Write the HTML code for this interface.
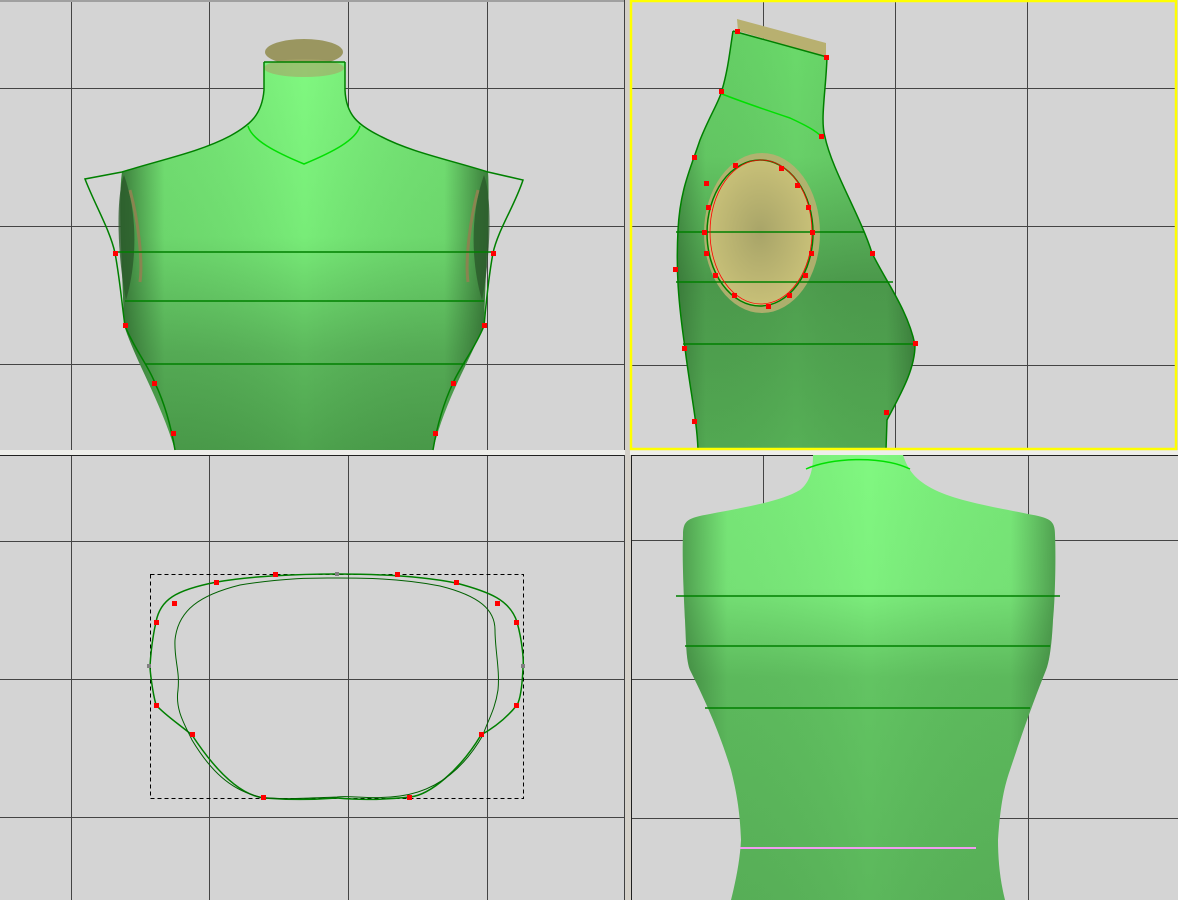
<!DOCTYPE html>
<html><head><meta charset="utf-8"><style>
html,body{margin:0;padding:0;background:#d4d0c8;}
svg{display:block}
</style></head><body>
<svg width="1178" height="900" viewBox="0 0 1178 900" xmlns="http://www.w3.org/2000/svg">
<defs>
<linearGradient id="gv" x1="0" y1="0" x2="0" y2="1">
<stop offset="0" stop-color="#80f880"/><stop offset="0.45" stop-color="#78ec78"/><stop offset="0.75" stop-color="#5cb85c"/><stop offset="1" stop-color="#4ea44e"/></linearGradient>
<linearGradient id="gh" x1="0" y1="0" x2="1" y2="0">
<stop offset="0" stop-color="#1e4a1e" stop-opacity="0.7"/><stop offset="0.12" stop-color="#2a5a2a" stop-opacity="0.15"/><stop offset="0.5" stop-color="#000" stop-opacity="0"/><stop offset="0.88" stop-color="#2a5a2a" stop-opacity="0.15"/><stop offset="1" stop-color="#1e4a1e" stop-opacity="0.7"/></linearGradient>
<linearGradient id="gs" x1="0" y1="0" x2="0" y2="1">
<stop offset="0" stop-color="#6ada6a"/><stop offset="0.3" stop-color="#68d068"/><stop offset="0.6" stop-color="#4e9e4e"/><stop offset="1" stop-color="#56b056"/></linearGradient>
<radialGradient id="gk" cx="0.5" cy="0.5" r="0.5"><stop offset="0" stop-color="#a8a468"/><stop offset="1" stop-color="#c8c078"/></radialGradient>
<linearGradient id="gb" x1="0" y1="0" x2="0" y2="1">
<stop offset="0" stop-color="#80f880"/><stop offset="0.3" stop-color="#7ef07e"/><stop offset="0.5" stop-color="#62c462"/><stop offset="1" stop-color="#5cb85c"/></linearGradient>
</defs>
<rect x="0" y="0" width="625" height="450" fill="#d4d4d4"/>
<rect x="630" y="0" width="548" height="451" fill="#d4d4d4"/>
<rect x="0" y="455" width="625" height="445" fill="#d4d4d4"/>
<rect x="631" y="455" width="547" height="445" fill="#d4d4d4"/>
<rect x="0" y="450" width="1178" height="5" fill="#eeeeea"/>
<rect x="625" y="0" width="5" height="900" fill="#d4d0c8"/>
<line x1="0" y1="1" x2="625" y2="1" stroke="#a0a0a0" stroke-width="2"/>
<line x1="624.5" y1="0" x2="624.5" y2="450" stroke="#404040"/>
<line x1="0" y1="455.5" x2="625" y2="455.5" stroke="#202020"/>
<line x1="624.5" y1="455" x2="624.5" y2="900" stroke="#404040"/>
<line x1="631" y1="455.5" x2="1178" y2="455.5" stroke="#202020"/>
<line x1="631.5" y1="455" x2="631.5" y2="900" stroke="#202020"/>
<g stroke="#444" stroke-width="1">
<line x1="71.5" y1="2" x2="71.5" y2="450"/><line x1="209.5" y1="2" x2="209.5" y2="450"/><line x1="348.5" y1="2" x2="348.5" y2="450"/><line x1="487.5" y1="2" x2="487.5" y2="450"/>
<line x1="0" y1="88.5" x2="624" y2="88.5"/><line x1="0" y1="226.5" x2="624" y2="226.5"/><line x1="0" y1="364.5" x2="624" y2="364.5"/>
<line x1="763.5" y1="2" x2="763.5" y2="450"/><line x1="895.5" y1="2" x2="895.5" y2="450"/><line x1="1027.5" y1="2" x2="1027.5" y2="450"/>
<line x1="632" y1="88.5" x2="1176" y2="88.5"/><line x1="632" y1="226.5" x2="1176" y2="226.5"/><line x1="632" y1="365.5" x2="1176" y2="365.5"/>
<line x1="71.5" y1="456" x2="71.5" y2="900"/><line x1="209.5" y1="456" x2="209.5" y2="900"/><line x1="348.5" y1="456" x2="348.5" y2="900"/><line x1="487.5" y1="456" x2="487.5" y2="900"/>
<line x1="0" y1="541.5" x2="624" y2="541.5"/><line x1="0" y1="679.5" x2="624" y2="679.5"/><line x1="0" y1="817.5" x2="624" y2="817.5"/>
<line x1="763.5" y1="456" x2="763.5" y2="900"/><line x1="1028.5" y1="456" x2="1028.5" y2="900"/>
<line x1="632" y1="540.5" x2="1178" y2="540.5"/><line x1="632" y1="679.5" x2="1178" y2="679.5"/><line x1="632" y1="818.5" x2="1178" y2="818.5"/>
</g>

<ellipse cx="304" cy="52" rx="39" ry="13" fill="#9a9660"/>
<path d="M264,62 L264,90 C262,115 250,125 230,136 C200,152 160,160 122,172 C118,200 122,260 124,325 C135,360 160,400 175,450 L433,450 C445,400 470,360 484,325 C486,260 490,200 488,172 C450,160 410,152 380,136 C358,125 346,115 345,90 L345,62 Z" fill="url(#gv)"/>
<path d="M264,62 L264,90 C262,115 250,125 230,136 C200,152 160,160 122,172 C118,200 122,260 124,325 C135,360 160,400 175,450 L433,450 C445,400 470,360 484,325 C486,260 490,200 488,172 C450,160 410,152 380,136 C358,125 346,115 345,90 L345,62 Z" fill="url(#gh)"/>
<ellipse cx="304" cy="68" rx="40" ry="9" fill="#a8a468" opacity="0.6"/>
<path d="M124,175 C115,200 118,260 126,300 C135,270 140,220 124,175Z" fill="#2a5a2a" opacity="0.8"/>
<path d="M484,175 C493,200 490,260 482,300 C473,270 468,220 484,175Z" fill="#2a5a2a" opacity="0.8"/>
<path d="M130,190 C138,220 143,260 140,282" stroke="#8a8450" stroke-width="3" fill="none"/>
<path d="M478,190 C470,220 465,260 468,282" stroke="#8a8450" stroke-width="3" fill="none"/>
<g fill="none" stroke="#008000" stroke-width="1.5">
<line x1="264" y1="62" x2="345" y2="62"/>
<path d="M264,62 L264,90 C262,115 250,125 230,136 C200,152 160,160 122,172 L85,179 C95,205 110,230 115,253 C120,280 122,305 125,326 C135,350 148,365 155,383 C163,400 170,420 175,450"/>
<path d="M345,62 L345,90 C346,115 358,125 380,136 C410,152 450,160 488,172 L523,180 C515,205 498,230 493,253 C488,280 486,305 484,326 C474,350 461,365 453,383 C445,400 438,420 433,450"/>
<line x1="115" y1="252" x2="493" y2="252"/><line x1="125" y1="301" x2="484" y2="301"/><line x1="145" y1="364" x2="465" y2="364"/>
</g>
<path d="M248,126 C252,140 275,152 304,164 C333,152 356,140 360,126" fill="none" stroke="#00e000" stroke-width="1.5"/>
<g fill="#ff0000">
<rect x="113" y="251" width="5" height="5"/><rect x="123" y="323" width="5" height="5"/><rect x="152" y="381" width="5" height="5"/><rect x="171" y="431" width="5" height="5"/>
<rect x="491" y="251" width="5" height="5"/><rect x="482" y="323" width="5" height="5"/><rect x="451" y="381" width="5" height="5"/><rect x="433" y="431" width="5" height="5"/>
</g>

<path d="M737,19 L826,43 L826,57 L738,31 Z" fill="#b8b070"/>
<path d="M733,31 L827,57 C826,90 820,120 825,137 C832,170 860,215 872,253 C885,280 908,310 915,345 C915,370 900,395 887,420 L886,450 L698,450 C697,420 690,390 685,348 C678,300 676,270 678,230 C680,190 690,170 700,140 C710,115 720,100 722,90 C728,70 730,50 733,31 Z" fill="url(#gs)"/>
<path d="M733,31 L827,57 C826,90 820,120 825,137 C832,170 860,215 872,253 C885,280 908,310 915,345 C915,370 900,395 887,420 L886,450 L698,450 C697,420 690,390 685,348 C678,300 676,270 678,230 C680,190 690,170 700,140 C710,115 720,100 722,90 C728,70 730,50 733,31 Z" fill="url(#gh)" opacity="0.6"/>
<ellipse cx="762" cy="233" rx="58" ry="80" fill="#b8b070" opacity="0.9"/>
<ellipse cx="760" cy="233" rx="53" ry="73" fill="url(#gk)"/>
<g fill="none" stroke="#008000" stroke-width="1.5">
<path d="M733,31 C730,50 728,70 722,90 C720,100 710,115 700,140 C690,170 680,190 678,230 C676,270 678,300 685,348 C690,390 697,420 698,450"/>
<path d="M827,57 C826,90 820,120 825,137 C832,170 860,215 872,253 C885,280 908,310 915,345 C915,370 900,395 887,420 L886,450"/>
<line x1="733" y1="31" x2="827" y2="57"/>
<line x1="676" y1="232" x2="864" y2="232"/><line x1="676" y1="282" x2="893" y2="282"/><line x1="683" y1="344" x2="915" y2="344"/>
<ellipse cx="760" cy="233" rx="53" ry="73"/>
</g>
<path d="M722,94 C745,103 760,108 790,118 C805,125 815,130 822,137" fill="none" stroke="#00e000" stroke-width="1.5"/>
<ellipse cx="761" cy="232" rx="51" ry="72" fill="none" stroke="#ff0000" stroke-width="0.8"/>
<g fill="#ff0000">
<rect x="735" y="29" width="5" height="5"/><rect x="824" y="55" width="5" height="5"/><rect x="719" y="89" width="5" height="5"/><rect x="819" y="134" width="5" height="5"/>
<rect x="692" y="155" width="5" height="5"/><rect x="673" y="267" width="5" height="5"/><rect x="682" y="346" width="5" height="5"/><rect x="692" y="419" width="5" height="5"/>
<rect x="870" y="251" width="5" height="5"/><rect x="913" y="341" width="5" height="5"/><rect x="884" y="410" width="5" height="5"/>
<rect x="733" y="163" width="5" height="5"/><rect x="779" y="166" width="5" height="5"/><rect x="704" y="181" width="5" height="5"/><rect x="795" y="183" width="5" height="5"/>
<rect x="706" y="205" width="5" height="5"/><rect x="806" y="205" width="5" height="5"/><rect x="702" y="230" width="5" height="5"/><rect x="810" y="230" width="5" height="5"/>
<rect x="704" y="251" width="5" height="5"/><rect x="809" y="251" width="5" height="5"/><rect x="713" y="273" width="5" height="5"/><rect x="803" y="273" width="5" height="5"/>
<rect x="732" y="293" width="5" height="5"/><rect x="787" y="293" width="5" height="5"/><rect x="766" y="304" width="5" height="5"/>
</g>
<rect x="631" y="1" width="545" height="448" fill="none" stroke="#ffff00" stroke-width="2.5"/>

<rect x="150.5" y="574.5" width="373" height="224" fill="none" stroke="#000" stroke-dasharray="4,3"/>
<path d="M156,622 C160,600 175,590 217,582 C250,576 300,574 337,574 C380,574 420,576 456,583 C490,592 510,600 517,622 C522,640 524,660 523,668 C522,690 520,700 517,705 C505,720 490,730 481,735 C460,770 430,795 410,797 C380,800 360,800 337,798 C310,800 290,800 264,798 C240,795 215,770 192,735 C180,725 165,715 156,705 C152,690 150,670 150,666 C151,650 153,635 156,622 Z" fill="none" stroke="#008000" stroke-width="1.5"/>
<path d="M175,640 C178,610 200,595 240,585 C290,577 320,578 337,578 C360,578 400,578 440,586 C480,596 495,610 495,630 C495,650 500,670 498,690 C495,710 488,720 483,735 C460,775 430,792 400,796 C370,800 350,795 337,797 C310,798 280,800 260,797 C230,790 210,770 192,740 C185,725 175,710 178,690 C180,670 174,660 175,640 Z" fill="none" stroke="#006000" stroke-width="1"/>
<g fill="#ff0000">
<rect x="154" y="620" width="5" height="5"/><rect x="172" y="601" width="5" height="5"/><rect x="214" y="580" width="5" height="5"/><rect x="273" y="572" width="5" height="5"/>
<rect x="395" y="572" width="5" height="5"/><rect x="454" y="580" width="5" height="5"/><rect x="495" y="601" width="5" height="5"/><rect x="514" y="620" width="5" height="5"/>
<rect x="154" y="703" width="5" height="5"/><rect x="190" y="732" width="5" height="5"/><rect x="261" y="795" width="5" height="5"/><rect x="407" y="795" width="5" height="5"/>
<rect x="479" y="732" width="5" height="5"/><rect x="514" y="703" width="5" height="5"/>
</g>
<g fill="#808080"><rect x="147" y="664" width="4" height="4"/><rect x="521" y="664" width="4" height="4"/><rect x="335" y="572" width="4" height="4"/></g>

<path d="M813,455 L903,455 C908,470 915,480 935,490 C960,502 1000,508 1028,514 C1050,518 1055,520 1055,535 C1056,560 1055,600 1053,620 C1052,640 1050,660 1046,670 C1030,710 1020,740 1010,770 C1003,790 1000,810 998,840 C998,860 1000,880 1005,900 L731,900 C736,880 740,860 741,840 C740,810 736,790 731,770 C722,740 710,710 690,670 C686,660 686,640 685,620 C684,600 682,560 683,535 C683,520 688,518 710,514 C740,508 780,502 800,490 C810,482 813,470 813,455 Z" fill="url(#gb)"/>
<path d="M813,455 L903,455 C908,470 915,480 935,490 C960,502 1000,508 1028,514 C1050,518 1055,520 1055,535 C1056,560 1055,600 1053,620 C1052,640 1050,660 1046,670 C1030,710 1020,740 1010,770 C1003,790 1000,810 998,840 C998,860 1000,880 1005,900 L731,900 C736,880 740,860 741,840 C740,810 736,790 731,770 C722,740 710,710 690,670 C686,660 686,640 685,620 C684,600 682,560 683,535 C683,520 688,518 710,514 C740,508 780,502 800,490 C810,482 813,470 813,455 Z" fill="url(#gh)" opacity="0.7"/>
<path d="M806,469 C830,458 880,455 910,469" fill="none" stroke="#00e000" stroke-width="1.5"/>
<g stroke="#008000" stroke-width="1.5">
<line x1="676" y1="596" x2="1060" y2="596"/><line x1="685" y1="646" x2="1050" y2="646"/><line x1="705" y1="708" x2="1030" y2="708"/>
</g>
<line x1="740" y1="848" x2="976" y2="848" stroke="#f09cf0" stroke-width="2"/>
</svg>
</body></html>
